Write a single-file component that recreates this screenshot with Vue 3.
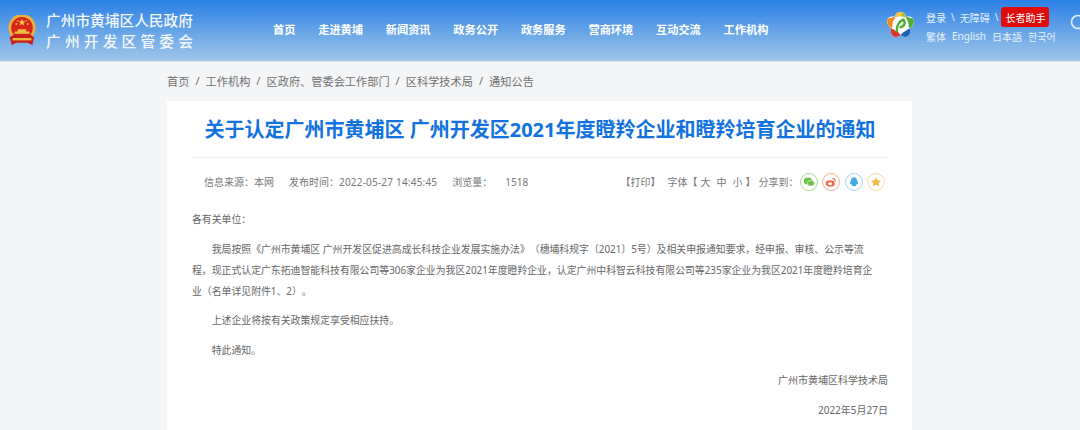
<template>
  <div class="page">
    <header class="top">
      <div class="brand">
        <svg class="emblem" viewBox="0 0 32 34" width="30" height="32">
          <circle cx="16" cy="13.500" r="14.500" fill="#e8b23c" />
          <circle cx="16" cy="13.500" r="11.500" fill="#d8251c" />
          <path d="M16 4l1 2.600 2.800.1-2.200 1.700.8 2.700-2.400-1.600-2.400 1.600.8-2.700-2.200-1.700 2.800-.1z" fill="#f2c94c" />
          <circle cx="10" cy="9.500" r="1" fill="#f2c94c" />
          <circle cx="22" cy="9.500" r="1" fill="#f2c94c" />
          <circle cx="11.500" cy="6" r=".8" fill="#f2c94c" />
          <circle cx="20.500" cy="6" r=".8" fill="#f2c94c" />
          <path d="M8 20v-2.500h3.500V15h9v2.500H24V20z" fill="#f0c040" />
          <path d="M3 24l4-3h18l4 3-2 8-5-2.500H10L5 32z" fill="#c8201a" />
          <path d="M6 24.500h20v2.500H6z" fill="#eeb93c" />
        </svg>
        <div class="brand-text">
          <div class="brand-line">广州市黄埔区人民政府</div>
          <div class="brand-line spaced">广州开发区管委会</div>
        </div>
      </div>
      <nav class="nav">
        <a v-for="item in navItems" :key="item" class="nav-item">{{ item }}</a>
      </nav>
      <div class="top-right">
        <svg class="city-logo" viewBox="0 1 30 28" width="29" height="27">
          <path d="M15 2c3 0 5 2 6 5 4-1 8 1 8 5 0 3-2 5-4 7 1 4-1 9-5 9-2 0-4-1-5-2-2 1-3 2-5 2-4 0-6-5-5-9-2-2-4-4-4-7 0-4 4-6 8-5 1-3 3-5 6-5z" fill="#fff" />
          <path d="M15 2c3 0 5 2 6 5l-6 2-6-2c1-3 3-5 6-5z" fill="#f6c33a" />
          <path d="M21 7c-1-2-2-3-4-4.500l-2 6.500z" fill="#8cc63f" />
          <path d="M9 7L1.500 9C.5 13 2 16 5 19l5-5z" fill="#ef8a1c" />
          <path d="M21 7l7.500 2c1 4-.5 7-3.500 10l-5-5z" fill="#4fae32" />
          <path d="M5 19c-1 4 1 9 5 9 2 0 4-1 5-2l-3-4z" fill="#d9352c" />
          <path d="M25 19c1 4-1 9-5 9-2 0-4-1-5-2l4-4z" fill="#1d62b0" />
          <circle cx="15" cy="15" r="8.500" fill="#fff" />
          <path d="M11 23c0-6 1-11 7-13 3 4 0 8-4 8" fill="none" stroke="#4fae32" stroke-width="2.600" />
        </svg>
        <div class="links">
          <div class="links-row">
            <span>登录</span><span class="sep">\</span><span>无障碍</span><span class="sep">\</span>
            <span class="elder">长者助手</span>
          </div>
          <div class="links-row lang">
            <span>繁体</span><span>English</span><span>日本語</span><span class="ko">한국어</span>
          </div>
        </div>
        <svg class="search" viewBox="0 0 20 20" width="20" height="20">
          <circle cx="9" cy="9" r="6.500" fill="none" stroke="#e4f0fb" stroke-width="1.600" />
          <path d="M14 14l4 4" stroke="#e4f0fb" stroke-width="1.600" />
        </svg>
      </div>
    </header>

    <main class="wrap">
      <div class="crumbs">
        <template v-for="(c, i) in crumbs" :key="c">
          <span v-if="i > 0">/</span>
          <a>{{ c }}</a>
        </template>
      </div>

      <article class="card">
        <h1 class="title">关于认定广州市黄埔区 广州开发区2021年度瞪羚企业和瞪羚培育企业的通知</h1>
        <div class="meta">
          <div class="meta-left">
            <span>信息来源：本网</span>
            <span>发布时间：<em>2022-05-27 14:45:45</em></span>
            <span class="views">浏览量：<b>1518</b></span>
          </div>
          <div class="meta-right">
            <span class="print">【打印】</span>
            <span class="font-size">字体【<i>大</i><i>中</i><i>小</i>】</span>
            <span>分享到：</span>
            <div class="shares">
              <span class="share wechat">
                <svg viewBox="0 0 16 16">
                  <ellipse cx="6.500" cy="6.500" rx="5.500" ry="4.500" fill="#6cc04a" />
                  <ellipse cx="10.500" cy="9.500" rx="4.800" ry="3.800" fill="#6cc04a" stroke="#fff" stroke-width=".7" />
                </svg>
              </span>
              <span class="share weibo">
                <svg viewBox="0 0 16 16">
                  <ellipse cx="7" cy="10" rx="6" ry="4.300" fill="#f0673c" />
                  <ellipse cx="6.800" cy="10.300" rx="2.800" ry="2" fill="#fff" />
                  <path d="M10 3.500c2.500-.5 4 1.500 3.300 3.800" fill="none" stroke="#f0673c" stroke-width="1.500" />
                </svg>
              </span>
              <span class="share qq">
                <svg viewBox="0 0 16 16">
                  <path d="M8 1.500c2.700 0 4 2 4 4.500 1 1.500 1.800 3.500 1.300 5-.5.500-1-.3-1.500-1-.3 1-.7 1.800-1.300 2.300.8.300 1 1.200-2.500 1.200H8c-3.500 0-3.300-.9-2.500-1.200-.6-.5-1-1.300-1.300-2.300-.5.700-1 1.500-1.500 1C2.200 9.500 3 7.500 4 6c0-2.500 1.300-4.500 4-4.500z" fill="#45a9e6" />
                </svg>
              </span>
              <span class="share star">
                <svg viewBox="0 0 16 16">
                  <path d="M8 1.500l2 4.200 4.600.6-3.400 3.200.9 4.600L8 11.800l-4.100 2.300.9-4.600L1.400 6.300 6 5.700z" fill="#f5b93f" />
                </svg>
              </span>
            </div>
          </div>
        </div>
        <div class="body-text">
          <p class="flush">各有关单位：</p>
          <p class="main-para">我局按照《广州市黄埔区 广州开发区促进高成长科技企业发展实施办法》（穗埔科规字〔2021〕5号）及相关申报通知要求，经申报、审核、公示等流<br>程，现正式认定广东拓迪智能科技有限公司等306家企业为我区2021年度瞪羚企业，认定广州中科智云科技有限公司等235家企业为我区2021年度瞪羚培育企<br>业（名单详见附件1、2）。</p>
          <p>上述企业将按有关政策规定享受相应扶持。</p>
          <p>特此通知。</p>
          <p class="sign">广州市黄埔区科学技术局</p>
          <p class="sign">2022年5月27日</p>
        </div>
      </article>
    </main>
  </div>
</template>

<script setup>
const navItems = ['首页', '走进黄埔', '新闻资讯', '政务公开', '政务服务', '营商环境', '互动交流', '工作机构']
const crumbs = ['首页', '工作机构', '区政府、管委会工作部门', '区科学技术局', '通知公告']
</script>

<style scoped>
.page {
  font-family: "Noto Sans", "Noto Sans CJK SC", sans-serif;
  text-spacing-trim: space-all;
  color: #555;
  height: 430px;
  overflow: hidden;
}

.top {
  display: flex;
  align-items: center;
  height: 62px;
  padding-left: 7px;
  background: linear-gradient(#2a80e6, #a0c6e8);
  border-bottom: 1px solid #dfe6ee;
  box-sizing: border-box;
  color: #fff;
  overflow: hidden;
}

.brand {
  display: flex;
  align-items: center;
  gap: 9px;
  width: 266px;
  flex-shrink: 0;
}

.brand-line {
  font-size: 14.700px;
  font-weight: 500;
  line-height: 21px;
  color: #f2f8fe;
  white-space: nowrap;
}

.brand-line.spaced {
  letter-spacing: 4.200px;
}

.nav {
  display: flex;
  flex-shrink: 0;
  gap: 22.800px;
  width: 613px;
  margin-bottom: 4px;
}

.nav-item {
  font-size: 11.200px;
  font-weight: 700;
  white-space: nowrap;
}

.top-right {
  display: flex;
  align-items: flex-start;
  align-self: flex-start;
}

.city-logo {
  flex-shrink: 0;
  margin-top: 11px;
  margin-right: 11px;
}

.links {
  flex-shrink: 0;
  width: 143px;
  margin-top: 7px;
  font-size: 10px;
  color: #e8f2fc;
}

.links-row {
  display: flex;
  align-items: center;
  gap: 5px;
  height: 20px;
  white-space: nowrap;
}

.links-row.lang {
  gap: 6px;
  height: 18px;
}

.ko {
  font-family: "Noto Sans CJK KR", sans-serif;
}

.elder {
  display: flex;
  align-items: center;
  justify-content: center;
  width: 48px;
  height: 20px;
  margin-left: -2px;
  background: #e00c0c;
  border-radius: 3px;
  color: #fff;
}

.search {
  flex-shrink: 0;
  margin-top: 13px;
}

.wrap {
  width: 745px;
  margin: 0 168px 0 167px;
}

.crumbs {
  display: flex;
  align-items: center;
  gap: 6px;
  height: 39px;
  padding-bottom: 2px;
  box-sizing: border-box;
  font-size: 11.200px;
  color: #707070;
}

.card {
  padding: 0 24px 0 25px;
  background: #fff;
  height: 400px;
}

.title {
  margin: 0;
  padding: 17px 0 15px;
  font-size: 20px;
  line-height: 24px;
  font-weight: 700;
  color: #1172e0;
  text-align: center;
  border-bottom: 1px solid #eee;
  white-space: nowrap;
}

.meta {
  display: flex;
  justify-content: space-between;
  align-items: center;
  height: 47px;
  padding: 0 3px 0 12px;
  font-size: 10px;
  color: #777;
}

.meta-left {
  display: flex;
  gap: 15px;
}

.meta-left em {
  font-style: normal;
  letter-spacing: 0.2px;
}

.views b {
  margin-left: 13px;
  font-weight: 400;
}

.meta-right {
  display: flex;
  align-items: center;
}

.print {
  margin-right: 7px;
}

.font-size {
  margin-right: 3px;
}

.font-size i {
  font-style: normal;
  margin: 0 3px;
}

.shares {
  display: flex;
  gap: 4.500px;
  margin-left: 1px;
}

.share {
  display: flex;
  align-items: center;
  justify-content: center;
  width: 18px;
  height: 18px;
  box-sizing: border-box;
  border: 1px solid;
  border-radius: 50%;
}

.share svg {
  width: 12px;
  height: 12px;
}

.wechat { border-color: #a8d98c; }
.weibo { border-color: #f7ab8e; }
.qq { border-color: #a4d6f5; }
.star { border-color: #fad89a; }

.body-text {
  padding-top: 4px;
  font-size: 9.870px;
  line-height: 21px;
  color: #666;
}

.body-text p {
  margin: 0 0 9px;
  text-indent: 2em;
}

.body-text p.main-para {
  margin-bottom: 8px;
}

.body-text p.flush {
  text-indent: 0;
}

.body-text p.sign {
  font-size: 10px;
  text-align: right;
  text-indent: 0;
}
</style>

<style>
html, body {
  margin: 0;
  overflow: hidden;
  background: #f4f5f7;
}
</style>
